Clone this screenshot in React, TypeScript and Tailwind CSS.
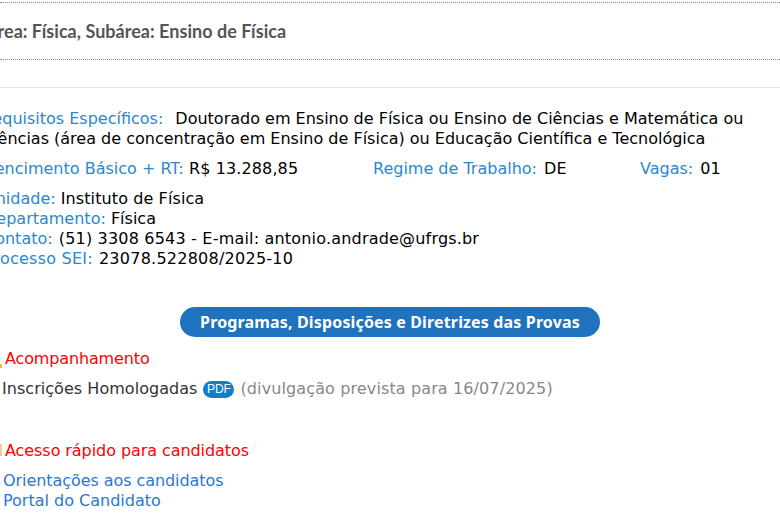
const label = 'text-[#2a87d0]'

export default function App() {
  return (
    <div className="h-[528px] w-[780px] overflow-hidden bg-white font-['DejaVu_Sans',sans-serif] text-[16px] leading-5 text-black">
      <div className="mt-[2px] flex h-[58px] items-center border-y border-dotted border-[#8a8a8a]">
        <h1 className="-ml-[15px] whitespace-nowrap font-['Lato',sans-serif] text-[18px] font-bold tracking-[0.03px] text-[#555]">
          Área: Física, Subárea: Ensino de Física
        </h1>
      </div>
      <div className="mt-[27px] border-t border-[#e5e5e5] pt-[21px]">
        <div className="-ml-[18px]">
          <p className="whitespace-nowrap">
            <span className={label}>Requisitos Específicos:</span>
            <span className="ml-3">Doutorado em Ensino de Física ou Ensino de Ciências e Matemática ou</span>
          </p>
          <p className="whitespace-nowrap">
            Ciências (área de concentração em Ensino de Física) ou Educação Científica e Tecnológica
          </p>
        </div>
        <div className="-ml-[15px] mt-[10px] flex whitespace-nowrap">
          <span className="w-[388px]">
            <span className={label}>Vencimento Básico + RT:</span>
            <span className="tracking-[0.12px]"> R$ 13.288,85</span>
          </span>
          <span className="w-[267px]">
            <span className={label}>Regime de Trabalho:</span>
            <span className="ml-[2px]"> DE</span>
          </span>
          <span>
            <span className={label}>Vagas:</span>
            <span className="ml-[2px]"> 01</span>
          </span>
        </div>
        <div className="-ml-[16px] mt-[10px] flex flex-col whitespace-nowrap">
          <p><span className={label}>Unidade:</span> <span className="tracking-[0.1px]">Instituto de Física</span></p>
          <p><span className={label}>Departamento:</span> Física</p>
          <p><span className={label}>Contato:</span> <span className="ml-[1px] tracking-[0.19px]">(51) 3308 6543 - E-mail: antonio.andrade@ufrgs.br</span></p>
          <p><span className={`${label} tracking-[0.22px]`}>Processo SEI:</span> <span className="ml-[1px] tracking-[0.25px]">23078.522808/2025-10</span></p>
        </div>
        <div className="mt-[38px] flex justify-center">
          <a className="flex h-[30px] w-[420px] items-center justify-center rounded-full bg-[#1f72bd] font-['Noto_Sans',sans-serif] text-[16px] font-bold tracking-[0.15px] text-white">
            Programas, Disposições e Diretrizes das Provas
          </a>
        </div>
        <div className="relative mt-[12px] pl-[5px] tracking-[-0.14px] text-[#ff0000]">
          <span className="absolute left-0 top-[15px] h-[4px] w-[2px] bg-[#f5b942]" />
          Acompanhamento
        </div>
        <div className="mt-[10px] flex items-center whitespace-nowrap pl-[2px] text-[#333]">
          <span className="tracking-[0.04px]">Inscrições Homologadas</span>
          <span className="ml-[6px] flex h-[17px] w-[31px] items-center justify-center rounded-full bg-[#0d7fcb] font-['Liberation_Sans',sans-serif] text-[12px] text-white">PDF</span>
          <span className="ml-[6px] tracking-[0.12px] text-[#888]">(divulgação prevista para 16/07/2025)</span>
        </div>
        <div className="relative mt-[42px] pl-[5px] tracking-[-0.07px] text-[#ff0000]">
          <span className="absolute left-0 top-[3px] h-[12px] w-[2px] bg-[#f3cf96]" />
          Acesso rápido para candidatos
        </div>
        <div className="mt-[10px] pl-[3px] text-[#2a78d0]">
          <p className="tracking-[-0.07px]">Orientações aos candidatos</p>
          <p>Portal do Candidato</p>
        </div>
      </div>
    </div>
  )
}
